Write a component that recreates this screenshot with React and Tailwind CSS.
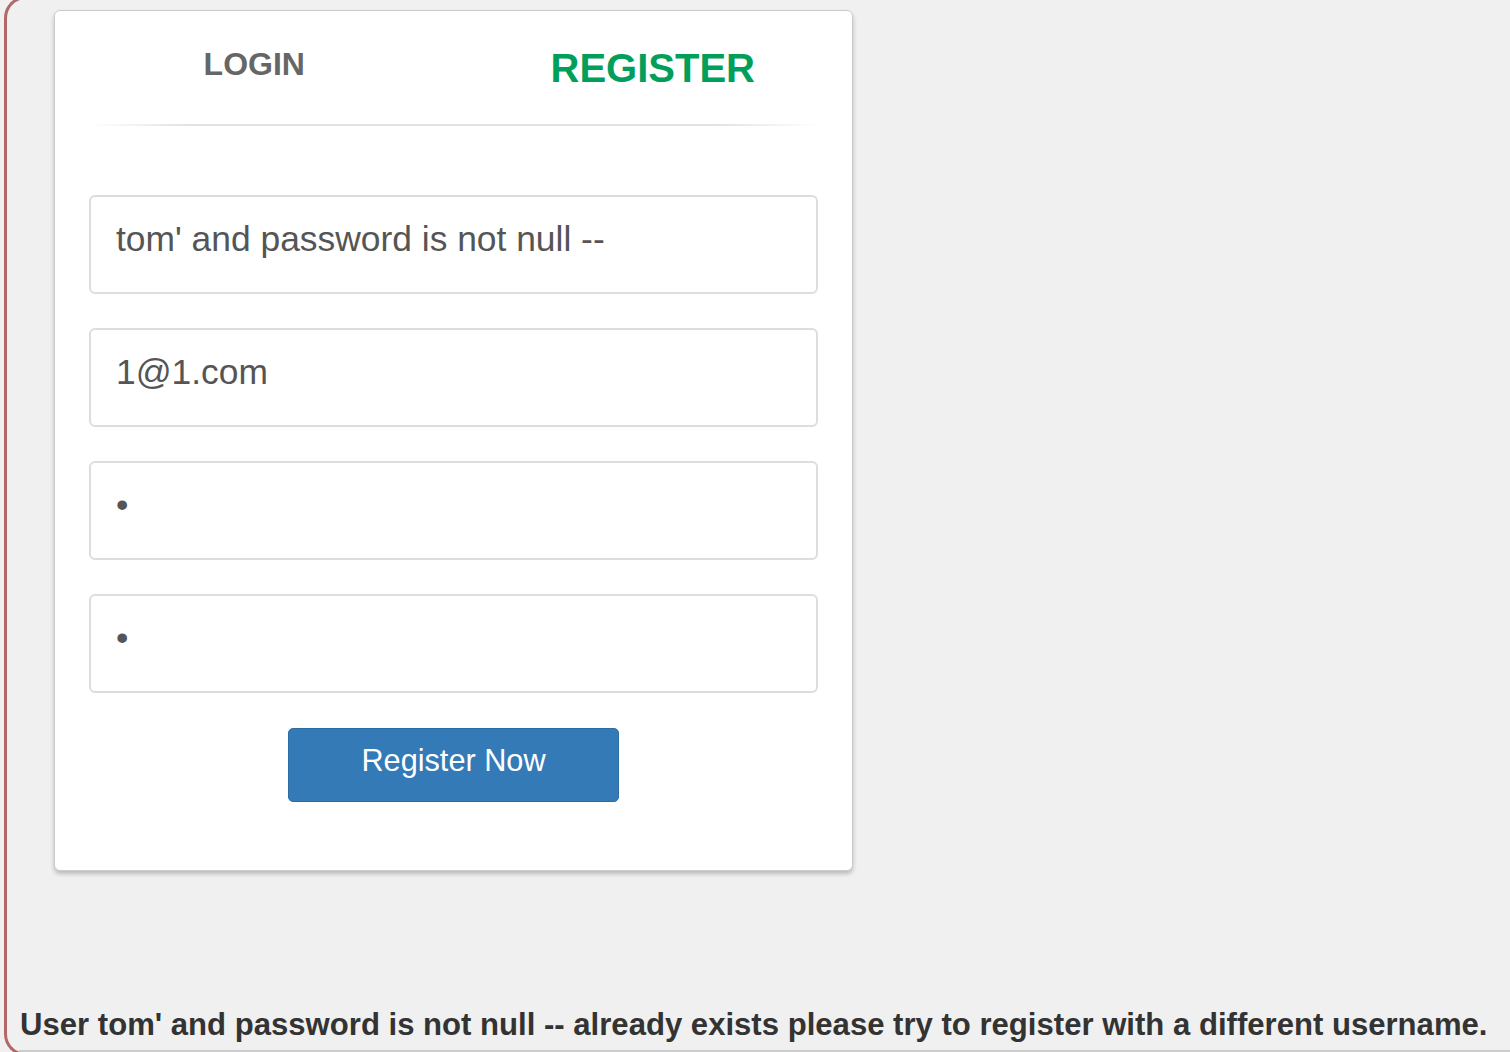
import { useState } from "react";

const Field = ({ value, type = "text" }) => {
  return (
    <div className="mx-[34px] h-[99px] rounded-[6px] border-2 border-[#dddddd] bg-white pl-[25px] pt-[25px] text-[35.4px] leading-none text-[#555555]">
      {type === "password" ? "•" : value}
    </div>
  );
};

const App = () => {
  const [tab] = useState("register");

  return (
    <div className="h-[1052px] w-full overflow-hidden bg-[#f0f0f0] font-['Liberation_Sans',Arial,sans-serif]">
      <div className="ml-[4px] -mt-[4px] h-[1060px] rounded-l-[22px] border-y-[3px] border-l-[3px] border-[#b36868]">
        <div className="ml-[47px] mt-[11px] h-[861px] w-[799px] rounded-[6px] border border-[#cccccc] bg-white shadow-[0_3px_4px_rgba(0,0,0,0.22)]">
          <div className="mt-[37px] flex h-[76px] items-start">
            <div
              className={`w-1/2 text-center font-bold leading-none ${
                tab === "login" ? "text-[40px] text-[#029f5b]" : "text-[32px] text-[#666666]"
              }`}
            >
              LOGIN
            </div>
            <div
              className={`w-1/2 text-center font-bold leading-none ${
                tab === "register" ? "text-[40px] text-[#029f5b]" : "text-[32px] text-[#666666]"
              }`}
            >
              REGISTER
            </div>
          </div>
          <div className="mx-[34px] h-[2px] bg-[linear-gradient(to_right,transparent,#e2e2e2_14%,#e2e2e2_86%,transparent)]" />

          <div className="mt-[69px] flex flex-col gap-[34px]">
            <Field value="tom' and password is not null --" />
            <Field value="1@1.com" />
            <Field type="password" />
            <Field type="password" />
          </div>

          <div className="mt-[35px] flex justify-center">
            <button className="flex h-[74px] w-[331px] items-center justify-center rounded-[5px] border border-[#2e6da4] bg-[#337ab7] pb-[7px] text-[30.7px] leading-none text-white">
              Register Now
            </button>
          </div>
        </div>

        <p className="ml-[13px] mt-[138px] text-[31.1px] font-bold leading-none text-[#333333]">
          User tom' and password is not null -- already exists please try to register with a different username.
        </p>
        <div className="ml-[12px] mt-[10px] h-[3px] bg-[#cccccc]" />
      </div>
    </div>
  );
};

export default App;
